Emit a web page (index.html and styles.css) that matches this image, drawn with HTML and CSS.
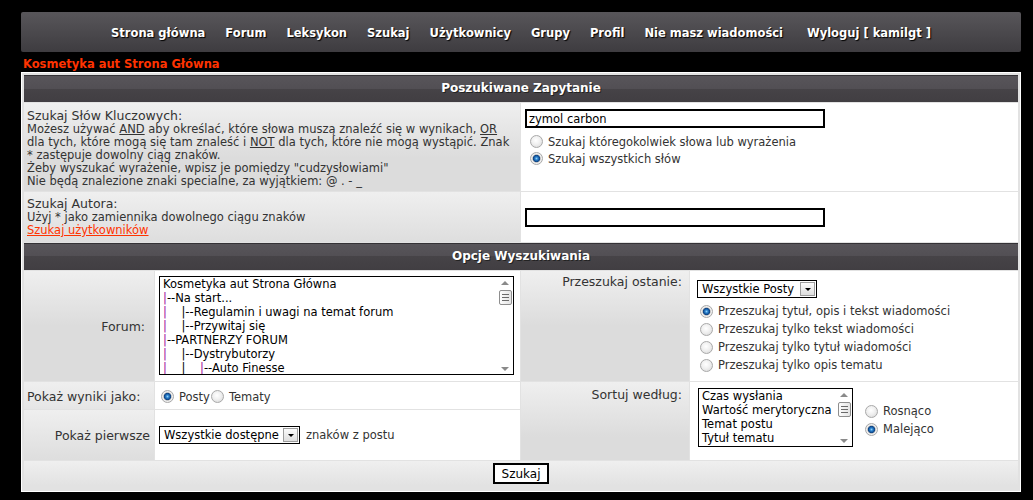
FILE: index.html
```html
<!DOCTYPE html>
<html lang="pl">
<head>
<meta charset="utf-8">
<title>Szukaj</title>
<link rel="stylesheet" href="styles.css">
</head>
<body>
<div class="page">
  <nav class="navbar">
    <a href="#">Strona główna</a>
    <a href="#">Forum</a>
    <a href="#">Leksykon</a>
    <a href="#">Szukaj</a>
    <a href="#">Użytkownicy</a>
    <a href="#">Grupy</a>
    <a href="#">Profil</a>
    <a href="#">Nie masz wiadomości</a>
    <a class="last" href="#">Wyloguj [ kamilgt ]</a>
  </nav>
  <a class="crumb" href="#">Kosmetyka aut Strona Główna</a>

  <div class="forumline">
    <div class="cat-head">Poszukiwane Zapytanie</div>

    <div class="cell lbl wide kw">
      <div class="title">Szukaj Słów Kluczowych:</div>
      <div class="desc">Możesz używać <u>AND</u> aby określać, które słowa muszą znaleźć się w wynikach, <u>OR</u><br>dla tych, które mogą się tam znaleść i <u>NOT</u> dla tych, które nie mogą wystąpić. Znak<br>* zastępuje dowolny ciąg znaków.<br>Żeby wyszukać wyrażenie, wpisz je pomiędzy "cudzysłowiami"<br>Nie będą znalezione znaki specialne, za wyjątkiem: @ . - _</div>
    </div>
    <div class="cell val wide kw-val">
      <input class="inp" type="text" value="zymol carbon">
      <div class="radios">
        <label class="opt"><input class="radio" type="radio" name="terms">Szukaj któregokolwiek słowa lub wyrażenia</label>
        <label class="opt"><input class="radio" type="radio" name="terms" checked>Szukaj wszystkich słów</label>
      </div>
    </div>

    <div class="cell lbl wide au">
      <div class="title">Szukaj Autora:</div>
      <div class="desc">Użyj * jako zamiennika dowolnego ciągu znaków<br><a class="link" href="#">Szukaj użytkowników</a></div>
    </div>
    <div class="cell val wide au-val">
      <input class="inp" type="text" value="">
    </div>

    <div class="cat-head">Opcje Wyszukiwania</div>

    <div class="cell lbl big right mid forum-lbl">Forum:&nbsp;</div>
    <div class="cell val forum-val">
      <div class="lb lb-forum">
        <div class="lb-items"><div>Kosmetyka aut Strona Główna</div><div><span class="p">|</span>--Na start...</div><div><span class="p">|</span>    |--Regulamin i uwagi na temat forum</div><div><span class="p">|</span>    |--Przywitaj się</div><div><span class="p">|</span>--PARTNERZY FORUM</div><div><span class="p">|</span>    |--Dystrybutorzy</div><div><span class="p">|</span>    |    <span class="p">|</span>--Auto Finesse</div></div>
        <div class="sb">
          <span class="arr up"></span>
          <span class="thumb"><i></i><i></i><i></i></span>
          <span class="sb-fill"></span>
          <span class="arr down"></span>
        </div>
      </div>
    </div>
    <div class="cell lbl big right top last-lbl">Przeszukaj ostanie:</div>
    <div class="cell val last-val">
      <span class="dd dd-posts"><span class="dd-text">Wszystkie Posty</span><span class="dd-btn"></span></span>
      <div class="radios r2">
        <label class="opt"><input class="radio" type="radio" name="where" checked>Przeszukaj tytuł, opis i tekst wiadomości</label>
        <label class="opt"><input class="radio" type="radio" name="where">Przeszukaj tylko tekst wiadomości</label>
        <label class="opt"><input class="radio" type="radio" name="where">Przeszukaj tylko tytuł wiadomości</label>
        <label class="opt"><input class="radio" type="radio" name="where">Przeszukaj tylko opis tematu</label>
      </div>
    </div>

    <div class="cell lbl big mid show-lbl">Pokaż wyniki jako:</div>
    <div class="cell val mid show-val">
      <label class="opt inl"><input class="radio" type="radio" name="show" checked>Posty</label>
      <label class="opt inl"><input class="radio" type="radio" name="show">Tematy</label>
    </div>
    <div class="cell lbl big right top sort-lbl">Sortuj według:</div>
    <div class="cell val sort-val">
      <div class="lb lb-sort">
        <div class="lb-items"><div>Czas wysłania</div><div>Wartość merytoryczna</div><div>Temat postu</div><div>Tytuł tematu</div></div>
        <div class="sb">
          <span class="arr up"></span>
          <span class="thumb"><i></i><i></i><i></i></span>
          <span class="sb-fill"></span>
          <span class="arr down"></span>
        </div>
      </div>
      <div class="radios r3">
        <label class="opt"><input class="radio" type="radio" name="dir">Rosnąco</label>
        <label class="opt"><input class="radio" type="radio" name="dir" checked>Malejąco</label>
      </div>
    </div>

    <div class="cell lbl big right mid first-lbl">Pokaż pierwsze</div>
    <div class="cell val mid first-val">
      <span class="dd dd-chars"><span class="dd-text">Wszystkie dostępne</span><span class="dd-btn"></span></span>
      <span class="after">znaków z postu</span>
    </div>

    <div class="cat-bottom">
      <button class="btn" type="button">Szukaj</button>
    </div>
  </div>
</div>
</body>
</html>
```

FILE: styles.css
```css
* { box-sizing: border-box; }

body {
  margin: 0;
  background: #000;
  font-family: "DejaVu Sans", Verdana, sans-serif;
  font-size: 11.5px;
  color: #333;
}

.page {
  padding: 12px 0 0 21px;
  width: 1033px;
}

.navbar {
  width: 1000px;
  height: 40px;
  border-radius: 2px;
  background: linear-gradient(#58565a, #4b494d 50%, #3e3c40);
  display: flex;
  justify-content: center;
  align-items: center;
  gap: 20px;
  padding: 2px 0 0 0;
}

.navbar a {
  color: #fff;
  font-weight: bold;
  font-size: 11.5px;
  text-decoration: none;
  text-shadow: 1px 1px 1px #000;
}
.navbar a.last { margin-left: 4px; }

.crumb {
  display: block;
  height: 20px;
  padding: 5px 0 0 2px;
  line-height: 14px;
  font-weight: bold;
  color: #ff3300;
  text-decoration: none;
}

.forumline {
  width: 1000px;
  border: 1px solid #fff;
  padding: 2px 2px 5px;
  background: #e2e2e2;
  display: grid;
  grid-template-columns: 130px 365px 168px 328px;
  gap: 1px;
}

.cat-head {
  grid-column: 1 / -1;
  height: 27px;
  line-height: 27px;
  text-align: center;
  color: #fff;
  font-weight: bold;
  font-size: 12px;
  text-shadow: 1px 1px 0 #222;
  background: linear-gradient(#343236 0, #343236 1px, #58555a 1px, #524f54 50%, #464347 50%, #413e42 100%);
}

.cell { padding: 4px 3px; }
.wide.lbl { grid-column: 1 / 3; }
.wide.val { grid-column: 3 / 5; }

.lbl {
  background: linear-gradient(#efefef, #dcdcdc 55px, #dcdcdc);
}
.val { background: #fff; }
.big { font-size: 12.5px; }

.right { text-align: right; }
.mid { display: flex; align-items: center; }
.mid.right { justify-content: flex-end; }
.top { padding-top: 3px; padding-right: 7px; }

.title { font-size: 12.5px; line-height: 14px; }
.desc { line-height: 13px; }
.desc u { text-decoration: underline; }

.kw { padding: 6px 3px 3px; }
.kw-val { padding: 6px 4px 4px; }
.au { padding: 5px 3px 5px; }
.au-val { display: flex; align-items: center; padding: 0 4px; }

.link { color: #ff3300; text-decoration: underline; }

.inp {
  display: block;
  width: 300px;
  height: 19px;
  border: 2px solid #000;
  padding: 0 2px;
  font: 11.5px "DejaVu Sans", Verdana, sans-serif;
  color: #000;
  background: #fff;
  outline: none;
}

.radios { margin-top: 5px; padding-left: 5px; }
.opt {
  display: flex;
  align-items: center;
  height: 17px;
  color: #333;
}
.opt.inl { display: inline-flex; margin-right: 1px; }

.radio {
  -webkit-appearance: none;
  appearance: none;
  width: 13px;
  height: 13px;
  margin: 0 5px 0 0;
  border-radius: 50%;
  border: 1px solid #a9a9a9;
  background: radial-gradient(circle at 45% 40%, #fff 0, #f0f0f0 45%, #d4d4d4 100%);
  flex: none;
}
.radio:checked {
  background: radial-gradient(circle at 50% 50%, #8fd0f8 0, #2a80cc 1.5px, #0c4182 3.3px, #b8b8b8 3.9px, #f6f6f6 4.6px, #e2e2e2 6px);
}

.forum-lbl { padding-right: 5px; }
.forum-val { padding: 5px 4px 6px; }

.lb {
  display: flex;
  border: 1px solid #000;
  background: #fff;
  overflow: hidden;
}
.lb-forum { width: 355px; height: 99px; }
.lb-items {
  flex: 1;
  padding: 0 0 0 3px;
  line-height: 14px;
  white-space: pre;
  color: #000;
  overflow: hidden;
}
.p { color: #a0129e; }

.sb {
  width: 16px;
  display: flex;
  flex-direction: column;
  align-items: center;
  padding: 4px 0 3px;
}
.arr {
  width: 0;
  height: 0;
  border-left: 4px solid transparent;
  border-right: 4px solid transparent;
}
.arr.up { border-bottom: 4px solid #8a8a8a; }
.arr.down { border-top: 4px solid #8a8a8a; }
.thumb {
  margin-top: 5px;
  width: 13px;
  height: 15px;
  border: 1px solid #8e8e8e;
  border-radius: 2px;
  background: linear-gradient(90deg, #fdfdfd, #e4e4e4);
  display: flex;
  flex-direction: column;
  justify-content: center;
  align-items: center;
  gap: 2px;
}
.thumb i { display: block; width: 7px; height: 1px; background: #6a6a6a; }
.sb-fill { flex: 1; }

.last-val { padding: 9px 7px 4px; }
.r2 { margin-top: 4px; padding-left: 3px; }
.r2 .opt { height: 18px; }

.dd {
  display: flex;
  align-items: center;
  height: 18px;
  border: 1px solid #000;
  background: #fff;
  padding-left: 4px;
  color: #000;
}
.dd-posts { width: 120px; }
.dd-chars { width: 141px; }
.dd-text { flex: 1; white-space: nowrap; }
.dd-btn {
  width: 15px;
  height: 14px;
  margin-right: 1px;
  border: 1px solid #9d9d9d;
  background: linear-gradient(#fbfbfb, #dedede);
  display: flex;
  justify-content: center;
  align-items: center;
}
.dd-btn::after {
  content: "";
  border-left: 3px solid transparent;
  border-right: 3px solid transparent;
  border-top: 3px solid #000;
  margin-top: 1px;
}

.show-lbl { height: 27px; padding-left: 3px; padding-top: 6px; }
.show-val { padding-left: 6px; padding-top: 6px; }

.sort-lbl { grid-row: span 2; padding-top: 5px; }
.sort-val {
  grid-row: span 2;
  display: flex;
  align-items: center;
  padding: 0 7px 0 8px;
  gap: 12px;
}
.lb-sort { width: 155px; height: 59px; margin-top: -7px; }
.r3 { margin-top: -2px; padding-left: 0; }
.r3 .opt { height: 18px; }

.first-lbl { height: 50px; padding-right: 4px; }
.first-val { padding-left: 4px; gap: 6px; }

.cat-bottom {
  grid-column: 1 / -1;
  height: 25px;
  display: flex;
  justify-content: center;
  align-items: center;
  background: linear-gradient(#efefef, #e2e2e2);
}

.btn {
  width: 56px;
  height: 21px;
  padding: 0;
  border: 2px solid #000;
  background: #fff;
  color: #000;
  font: 12px "DejaVu Sans", Verdana, sans-serif;
}
```
